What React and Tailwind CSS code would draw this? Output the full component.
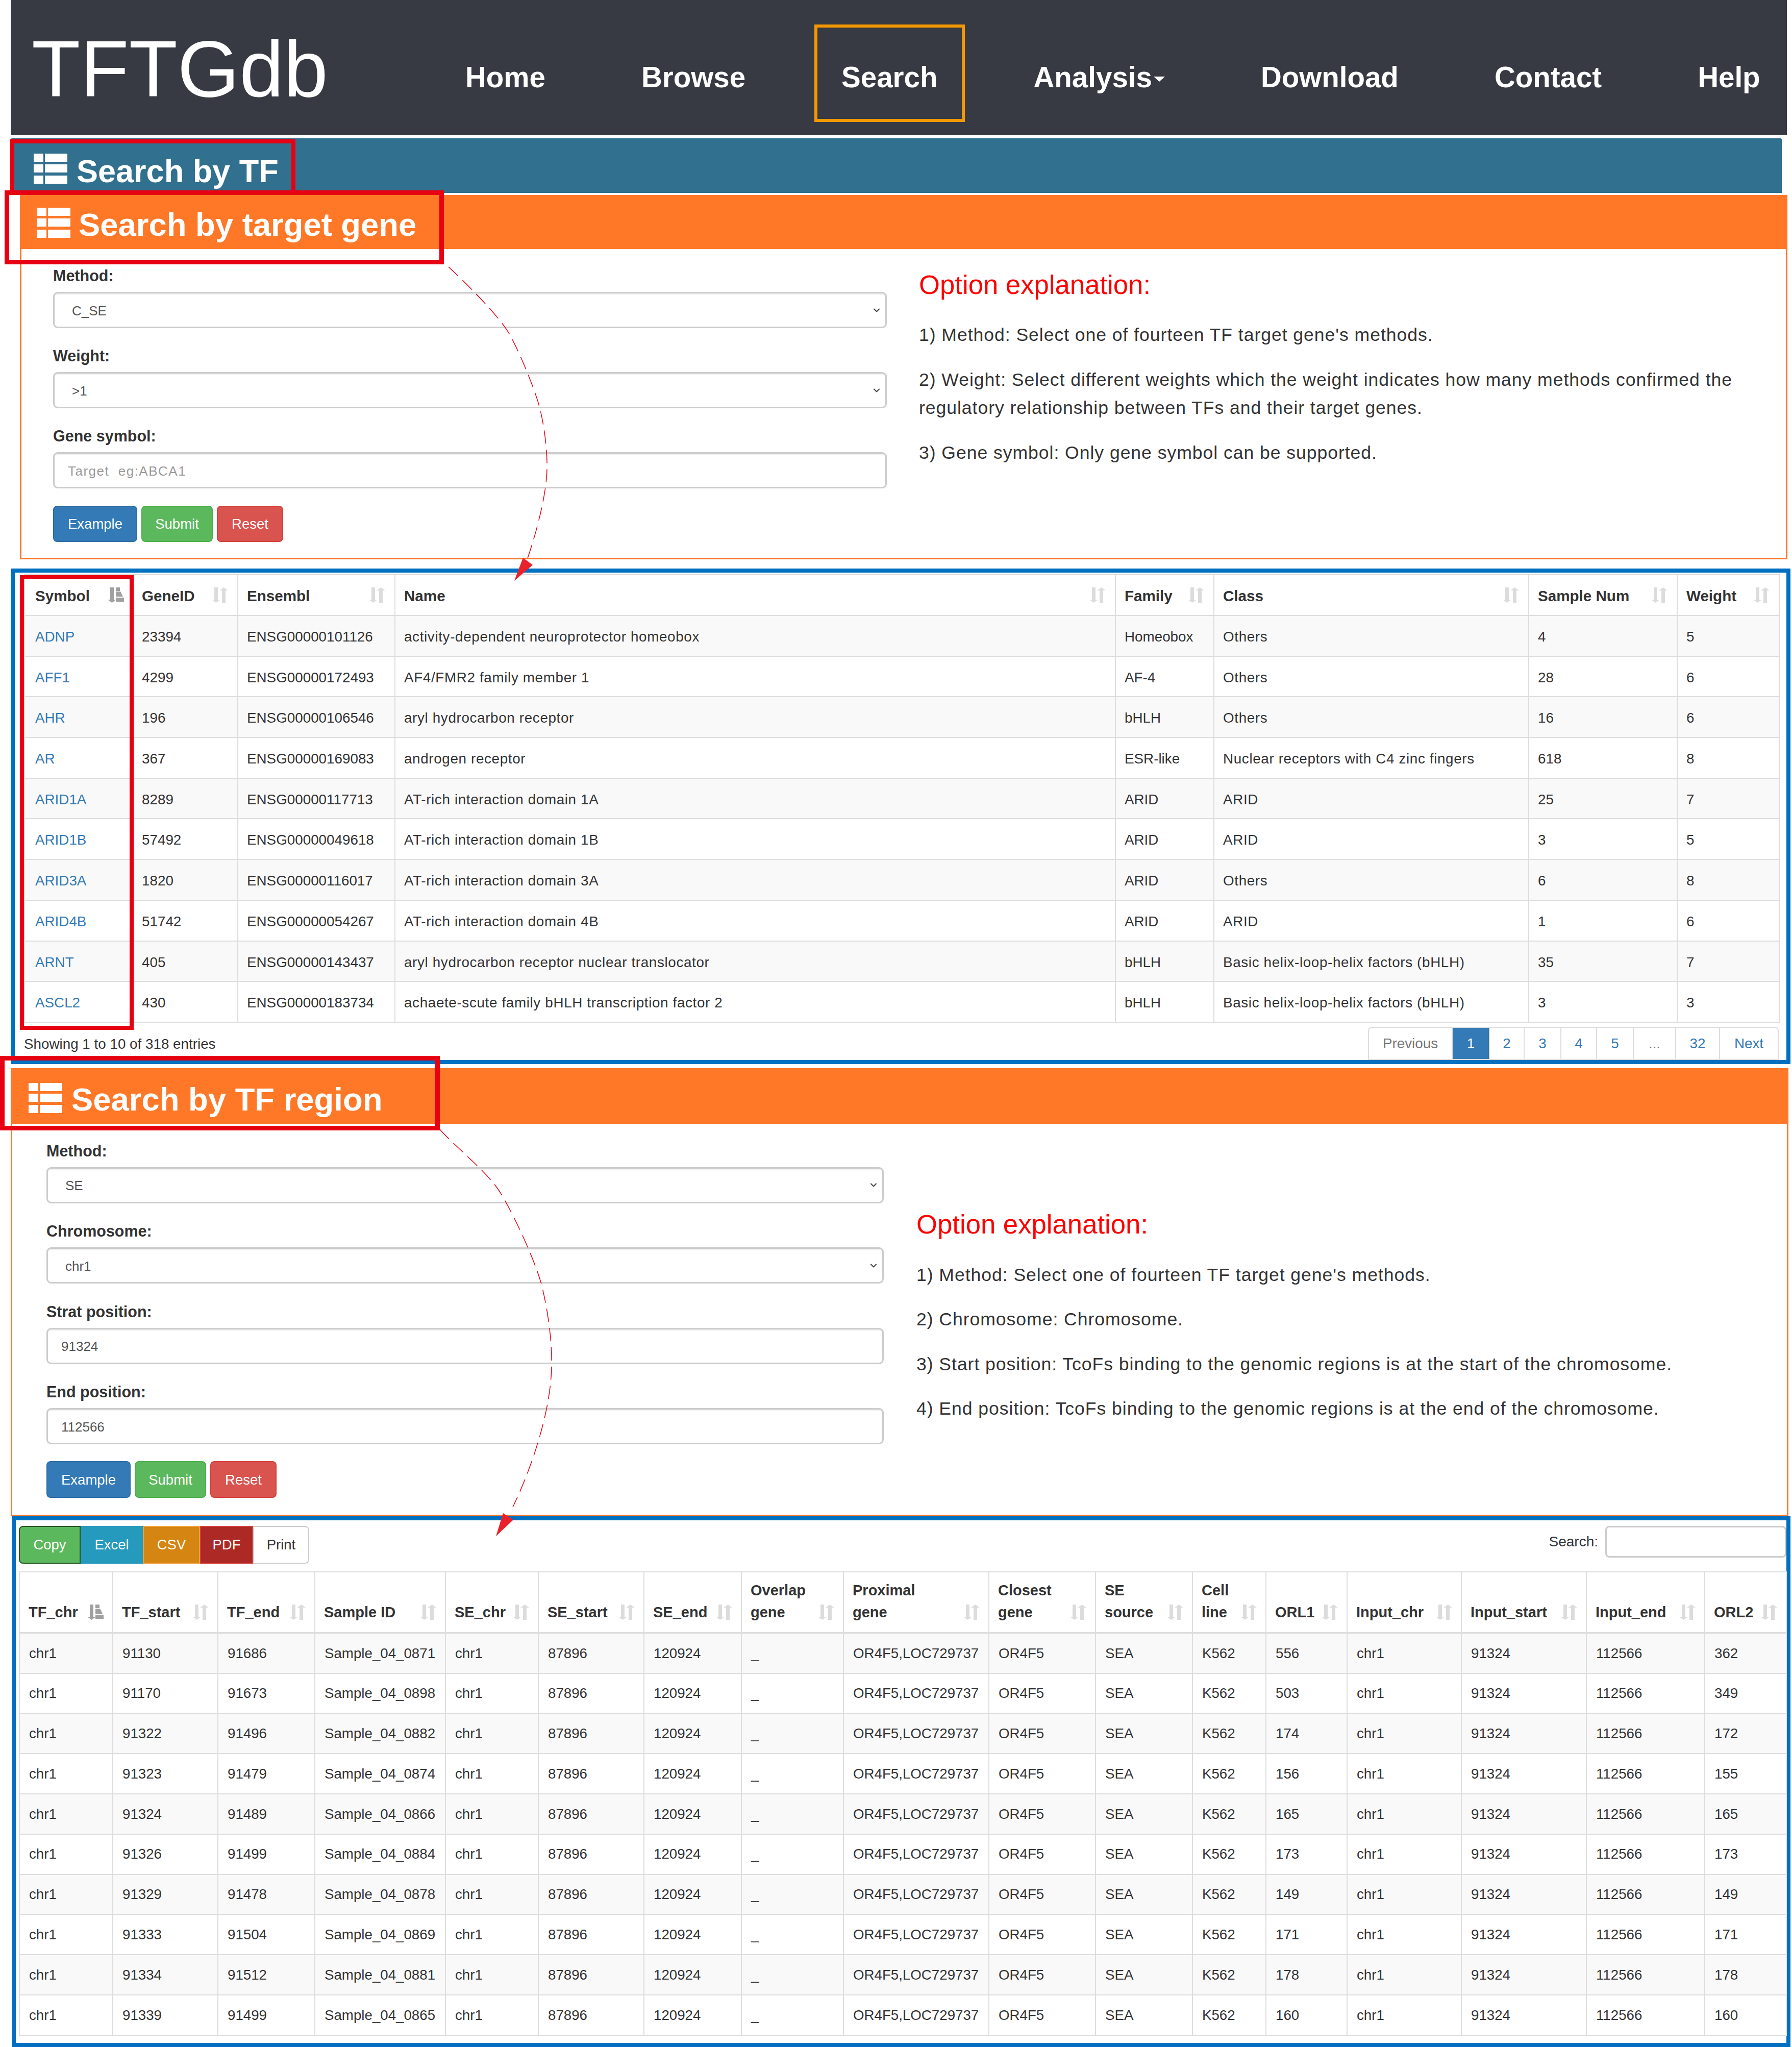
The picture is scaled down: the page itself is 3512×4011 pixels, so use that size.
import { ChevronDown } from "lucide-react";

const targetRows = [
  ["ADNP", "23394", "ENSG00000101126", "activity-dependent neuroprotector homeobox", "Homeobox", "Others", "4", "5"],
  ["AFF1", "4299", "ENSG00000172493", "AF4/FMR2 family member 1", "AF-4", "Others", "28", "6"],
  ["AHR", "196", "ENSG00000106546", "aryl hydrocarbon receptor", "bHLH", "Others", "16", "6"],
  ["AR", "367", "ENSG00000169083", "androgen receptor", "ESR-like", "Nuclear receptors with C4 zinc fingers", "618", "8"],
  ["ARID1A", "8289", "ENSG00000117713", "AT-rich interaction domain 1A", "ARID", "ARID", "25", "7"],
  ["ARID1B", "57492", "ENSG00000049618", "AT-rich interaction domain 1B", "ARID", "ARID", "3", "5"],
  ["ARID3A", "1820", "ENSG00000116017", "AT-rich interaction domain 3A", "ARID", "Others", "6", "8"],
  ["ARID4B", "51742", "ENSG00000054267", "AT-rich interaction domain 4B", "ARID", "ARID", "1", "6"],
  ["ARNT", "405", "ENSG00000143437", "aryl hydrocarbon receptor nuclear translocator", "bHLH", "Basic helix-loop-helix factors (bHLH)", "35", "7"],
  ["ASCL2", "430", "ENSG00000183734", "achaete-scute family bHLH transcription factor 2", "bHLH", "Basic helix-loop-helix factors (bHLH)", "3", "3"],
];

const targetCols = [
  ["Symbol", "w-[214px]"],
  ["GeneID", "w-[204px]"],
  ["Ensembl", "w-[308px]"],
  ["Name", "w-[1412px]"],
  ["Family", "w-[193px]"],
  ["Class", "w-[617px]"],
  ["Sample Num", "w-[291px]"],
  ["Weight", "w-[200px]"],
];

// start, end, sample, orl1, orl2
const regionRows = [
  ["91130", "91686", "Sample_04_0871", "556", "362"],
  ["91170", "91673", "Sample_04_0898", "503", "349"],
  ["91322", "91496", "Sample_04_0882", "174", "172"],
  ["91323", "91479", "Sample_04_0874", "156", "155"],
  ["91324", "91489", "Sample_04_0866", "165", "165"],
  ["91326", "91499", "Sample_04_0884", "173", "173"],
  ["91329", "91478", "Sample_04_0878", "149", "149"],
  ["91333", "91504", "Sample_04_0869", "171", "171"],
  ["91334", "91512", "Sample_04_0881", "178", "178"],
  ["91339", "91499", "Sample_04_0865", "160", "160"],
];

const regionCols = [
  [["TF_chr"], "w-[183px]"],
  [["TF_start"], "w-[206px]"],
  [["TF_end"], "w-[190px]"],
  [["Sample ID"], "w-[256px]"],
  [["SE_chr"], "w-[182px]"],
  [["SE_start"], "w-[207px]"],
  [["SE_end"], "w-[191px]"],
  [["Overlap", "gene"], "w-[200px]"],
  [["Proximal", "gene"], "w-[285px]"],
  [["Closest", "gene"], "w-[209px]"],
  [["SE", "source"], "w-[190px]"],
  [["Cell", "line"], "w-[144px]"],
  [["ORL1"], "w-[159px]"],
  [["Input_chr"], "w-[224px]"],
  [["Input_start"], "w-[245px]"],
  [["Input_end"], "w-[232px]"],
  [["ORL2"], "w-[160px]"],
];

const pages = [
  ["Previous", "w-[166px] text-[#777] border-l-2 rounded-tl-lg"],
  ["1", "w-[73px] bg-[#337ab7] text-white border-[#337ab7]"],
  ["2", "w-[68px] text-[#337ab7]"],
  ["3", "w-[72px] text-[#337ab7]"],
  ["4", "w-[70px] text-[#337ab7]"],
  ["5", "w-[72px] text-[#337ab7]"],
  ["...", "w-[83px] text-[#777]"],
  ["32", "w-[86px] text-[#337ab7]"],
  ["Next", "w-[115px] text-[#337ab7] rounded-tr-lg"],
];

const ListIcon = ({ className = "" }) => (
  <svg viewBox="0 0 66 59" className={`w-[66px] h-[59px] shrink-0 fill-white ${className}`}>
    <rect x="0" y="0" width="19" height="16" />
    <rect x="22" y="0" width="44" height="16" />
    <rect x="0" y="21" width="19" height="16" />
    <rect x="22" y="21" width="44" height="16" />
    <rect x="0" y="43" width="19" height="16" />
    <rect x="22" y="43" width="44" height="16" />
  </svg>
);

const SortIcon = ({ active, className = "" }) => (
  <svg viewBox="0 0 32 30" className={`absolute w-[32px] h-[30px] ${active ? "fill-[#a0a0a0]" : "fill-[#dcdcdc]"} ${className}`}>
    <rect x="5" y="0" width="7" height="24" />
    <polygon points="0,24 17,24 8.5,30" />
    {active ? (
      <>
        <rect x="16" y="0" width="8" height="7" />
        <polygon points="16,18 30,18 25,8 16,8" />
        <rect x="16" y="20" width="16" height="8" />
      </>
    ) : (
      <>
        <rect x="20" y="6" width="7" height="24" />
        <polygon points="15,6 32,6 23.5,0" />
      </>
    )}
  </svg>
);

const Field = ({ label, className = "mb-[32px]", children }) => (
  <div className={className}>
    <label className="block h-[44px] leading-[44px] mb-[10px] text-[30.5px] font-bold text-[#333]">{label}</label>
    {children}
  </div>
);

const Select = ({ value }) => (
  <div className="relative">
    <select
      defaultValue={value}
      className="block w-full h-[71px] appearance-none rounded-[9px] border-[3px] border-[#ccc] bg-white pl-[34px] pt-[3px] text-[26px] text-[#555] shadow-[inset_0_2px_2px_rgba(0,0,0,.075)]"
    >
      <option>{value}</option>
    </select>
    <ChevronDown className="absolute right-[10px] top-1/2 -translate-y-1/2 w-[20px] h-[20px] text-[#444]" strokeWidth={2.5} />
  </div>
);

const TextInput = ({ value, placeholder }) => (
  <input
    defaultValue={value}
    placeholder={placeholder}
    className="block w-full h-[71px] rounded-[9px] border-[3px] border-[#ccc] bg-white pl-[26px] pt-[3px] text-[26px] text-[#555] placeholder:text-[#999] placeholder:tracking-[1.5px] shadow-[inset_0_2px_2px_rgba(0,0,0,.075)]"
  />
);

const FormButtons = ({ h }) => (
  <div className="flex gap-[8px] text-[27.5px] text-white">
    <button className={`${h} w-[165px] rounded-lg border-2 border-[#2e6da4] bg-[#337ab7]`}>Example</button>
    <button className={`${h} w-[140px] rounded-lg border-2 border-[#4cae4c] bg-[#5cb85c]`}>Submit</button>
    <button className={`${h} w-[130px] rounded-lg border-2 border-[#d43f3a] bg-[#d9534f]`}>Reset</button>
  </div>
);

const Heading = ({ children }) => (
  <h3 className="text-[52.7px] leading-[58px] text-[#f00]">{children}</h3>
);

const Para = ({ children, className = "mb-[33px]" }) => (
  <p className={`text-[35.6px] leading-[55px] tracking-[0.95px] text-[#333] ${className}`}>{children}</p>
);

const targetCellPad = (j) => (j === 0 ? "pl-[20px]" : j === 1 ? "pl-[15px]" : "pl-[17px]");

function TargetTable() {
  return (
    <table className="w-[3439px] table-fixed border-collapse text-[27.8px] text-[#333]">
      <colgroup>
        {targetCols.map(([name, w]) => (
          <col key={name} className={w} />
        ))}
      </colgroup>
      <thead>
        <tr className="h-[80px]">
          {targetCols.map(([name], i) => (
            <th key={name} className={`relative border-2 border-[#ddd] pt-[4px] text-left text-[29.6px] font-bold ${targetCellPad(i)}`}>
              {name}
              <SortIcon active={i === 0} className="right-[18px] bottom-[24px]" />
            </th>
          ))}
        </tr>
      </thead>
      <tbody>
        {targetRows.map((r, i) => (
          <tr key={r[0]} className={`h-[79.7px] ${i % 2 === 0 ? "bg-[#f9f9f9]" : "bg-white"}`}>
            {r.map((c, j) => (
              <td
                key={j}
                className={`border-2 border-[#ddd] pt-[4px] ${targetCellPad(j)} ${j === 0 ? "text-[#337ab7]" : ""} ${j === 3 || j === 5 ? "tracking-[0.65px]" : ""}`}
              >
                {c}
              </td>
            ))}
          </tr>
        ))}
      </tbody>
    </table>
  );
}

function RegionTable() {
  return (
    <table className="w-[3463px] table-fixed border-collapse text-[27.7px] text-[#333]">
      <colgroup>
        {regionCols.map(([name, w]) => (
          <col key={name.join()} className={w} />
        ))}
      </colgroup>
      <thead>
        <tr className="h-[120px]">
          {regionCols.map(([lines], i) => (
            <th
              key={lines.join()}
              className="relative border-2 border-b-[3px] border-[#ddd] pl-[17px] pb-[17px] align-bottom text-left text-[29px] leading-[43px] font-bold"
            >
              {lines.map((l) => (
                <div key={l}>{l}</div>
              ))}
              <SortIcon active={i === 0} className="right-[17px] bottom-[24px]" />
            </th>
          ))}
        </tr>
      </thead>
      <tbody>
        {regionRows.map((r, i) => (
          <tr key={r[2]} className={`h-[78.8px] ${i % 2 === 0 ? "bg-[#f9f9f9]" : "bg-white"}`}>
            {["chr1", r[0], r[1], r[2], "chr1", "87896", "120924", "_", "OR4F5,LOC729737", "OR4F5", "SEA", "K562", r[3], "chr1", "91324", "112566", r[4]].map((c, j) => (
              <td key={j} className="border-2 border-[#ddd] pl-[18px] whitespace-nowrap">
                {c}
              </td>
            ))}
          </tr>
        ))}
      </tbody>
    </table>
  );
}

export default function App() {
  return (
    <div className="relative w-[3512px] h-[4011px] overflow-hidden bg-white font-['Liberation_Sans',Arial,sans-serif]">
      {/* navbar */}
      <nav className="ml-[21px] w-[3481px] h-[265px] bg-[#373a42] flex items-start pl-[41px] text-white overflow-hidden">
        <a className="block shrink-0 w-[756px] pt-[57px] text-[156px] leading-[156px]">TFTGdb</a>
        <ul className="flex shrink-0 mt-[120px] text-[56.5px] leading-[64px] font-bold">
          <li className="px-[94px]">Home</li>
          <li className="px-[94px]">Browse</li>
          <li className="px-[94px]">Search</li>
          <li className="px-[94px] flex items-center">
            Analysis
            <span className="ml-[3px] mt-[6px] w-0 h-0 border-t-[10px] border-x-[11px] border-t-white border-x-transparent" />
          </li>
          <li className="px-[94px]">Download</li>
          <li className="px-[94px]">Contact</li>
          <li className="px-[94px]">Help</li>
        </ul>
      </nav>

      {/* collapsed TF panel */}
      <div className="ml-[21px] mt-[6px] w-[3471px] h-[107px] pt-[12px] bg-[#31708f] flex items-center pl-[45px] gap-[18px] text-white rounded-t-[3px]">
        <ListIcon />
        <span className="mt-[8px] text-[63px] leading-[70px] font-bold">Search by TF</span>
      </div>

      {/* target gene panel */}
      <section className="ml-[39px] mt-[4px] w-[3464px] border-x-[3px] border-b-[3px] border-[#ff7828]">
        <div className="h-[106px] pt-[3px] bg-[#ff7828] flex items-center pl-[30px] gap-[16px] text-white">
          <ListIcon />
          <span className="mt-[7px] text-[63.4px] leading-[70px] font-bold">Search by target gene</span>
        </div>
        <div className="flex pb-[31px]">
          <div className="ml-[62px] w-[1634px] pt-[30px]">
            <Field label="Method:">
              <Select value="C_SE" />
            </Field>
            <Field label="Weight:">
              <Select value=">1" />
            </Field>
            <Field label="Gene symbol:" className="mb-[34px]">
              <TextInput placeholder="Target  eg:ABCA1" />
            </Field>
            <FormButtons h="h-[71px]" />
          </div>
          <div className="ml-[63px] w-[1664px] pt-[41px]">
            <Heading>Option explanation:</Heading>
            <div className="mt-[42px]">
              <Para>1) Method: Select one of fourteen TF target gene's methods.</Para>
              <Para>2) Weight: Select different weights which the weight indicates how many methods confirmed the regulatory relationship between TFs and their target genes.</Para>
              <Para>3) Gene symbol: Only gene symbol can be supported.</Para>
            </div>
          </div>
        </div>
      </section>

      {/* target gene result */}
      <section className="ml-[21px] mt-[18px] w-[3488px] border-[8px] border-[#0070c0] pl-[18px] pt-[3px]">
        <TargetTable />
        <div className="flex justify-between w-[3439px] mt-[8px] h-[65px] text-[27.8px] text-[#333]">
          <span className="leading-[68px]">Showing 1 to 10 of 318 entries</span>
          <div className="flex">
            {pages.map(([p, cls]) => (
              <span key={p} className={`flex items-center justify-center border-y-2 border-r-2 border-[#ddd] ${cls}`}>
                {p}
              </span>
            ))}
          </div>
        </div>
      </section>

      {/* TF region panel */}
      <section className="ml-[21px] mt-[8px] w-[3484px] h-[878px] border-x-[3px] border-b-[3px] border-[#ff7828]">
        <div className="h-[109px] pt-[8px] bg-[#ff7828] flex items-center pl-[32px] gap-[18px] text-white">
          <ListIcon />
          <span className="mt-[6px] text-[63.4px] leading-[70px] font-bold">Search by TF region</span>
        </div>
        <div className="flex">
          <div className="ml-[67px] w-[1641px] pt-[31px]">
            <Field label="Method:" className="mb-[32.5px]">
              <Select value="SE" />
            </Field>
            <Field label="Chromosome:" className="mb-[32.5px]">
              <Select value="chr1" />
            </Field>
            <Field label="Strat position:" className="mb-[32.5px]">
              <TextInput value="91324" />
            </Field>
            <Field label="End position:" className="mb-[33px]">
              <TextInput value="112566" />
            </Field>
            <FormButtons h="h-[72px]" />
          </div>
          <div className="ml-[64px] w-[1660px] pt-[168px]">
            <Heading>Option explanation:</Heading>
            <div className="mt-[43px]">
              <Para className="mb-[32.5px]">1) Method: Select one of fourteen TF target gene's methods.</Para>
              <Para className="mb-[32.5px]">2) Chromosome: Chromosome.</Para>
              <Para className="mb-[32.5px]">3) Start position: TcoFs binding to the genomic regions is at the start of the chromosome.</Para>
              <Para className="mb-[32.5px]">4) End position: TcoFs binding to the genomic regions is at the end of the chromosome.</Para>
            </div>
          </div>
        </div>
      </section>

      {/* TF region result */}
      <section className="ml-[23px] w-[3486px] border-[8px] border-[#0070c0] pl-[6px] pt-[11px] h-[1040px]">
        <div className="flex justify-between items-start mb-[15px] h-[74px]">
          <div className="flex text-[27.5px] h-[74px]">
            <button className="w-[121px] rounded-l-lg border-2 border-[#255625] bg-[#5cb85c] text-white">Copy</button>
            <button className="w-[122px] border-2 border-[#269abc] bg-[#269abc] text-white">Excel</button>
            <button className="w-[112px] border-2 border-[#eea236] bg-[#d58512] text-white">CSV</button>
            <button className="w-[104px] border-2 border-[#d43f3a] bg-[#ac2925] text-white">PDF</button>
            <button className="w-[110px] rounded-r-lg border-2 border-[#ccc] bg-white text-[#333]">Print</button>
          </div>
          <div className="flex items-center gap-[14px] text-[28px] text-[#333]">
            <span>Search:</span>
            <input className="w-[355px] h-[62px] rounded-[8px] border-[3px] border-[#ccc] bg-white" />
          </div>
        </div>
        <RegionTable />
      </section>

      {/* annotations drawn over the page */}
      <div className="absolute left-[1596px] top-[48px] w-[295px] h-[191px] border-[6px] border-[#f39800]" />
      <div className="absolute left-[20px] top-[273px] w-[559px] h-[109px] border-[8px] border-[#e60012]" />
      <div className="absolute left-[9px] top-[373px] w-[861px] h-[145px] border-[9px] border-[#e60012]" />
      <div className="absolute left-[39px] top-[1127px] w-[223px] h-[891px] border-[8px] border-[#e60012]" />
      <div className="absolute left-0 top-[2069px] w-[862px] h-[146px] border-[9px] border-[#e60012]" />
      <svg className="absolute left-0 top-0 w-[3512px] h-[4011px] pointer-events-none" viewBox="0 0 3512 4011" fill="none">
        <path
          d="M879 523 C915 556 966 608 991 643 C1011 671 1049 764 1058 800 C1066 832 1073 880 1072 920 C1071 970 1050 1050 1030 1105"
          stroke="#e60012"
          strokeWidth="1.5"
          strokeDasharray="26 12"
        />
        <polygon points="1025,1093 1044,1107 1008,1138" fill="#e8212b" />
        <path
          d="M862 2213 C895 2250 955 2296 980 2336 C1002 2371 1045 2460 1061 2516 C1075 2572 1082 2630 1081 2677 C1080 2760 1045 2870 1005 2953"
          stroke="#e60012"
          strokeWidth="1.5"
          strokeDasharray="26 12"
        />
        <polygon points="986,2965 1006,2978 972,3010" fill="#e8212b" />
      </svg>
    </div>
  );
}
